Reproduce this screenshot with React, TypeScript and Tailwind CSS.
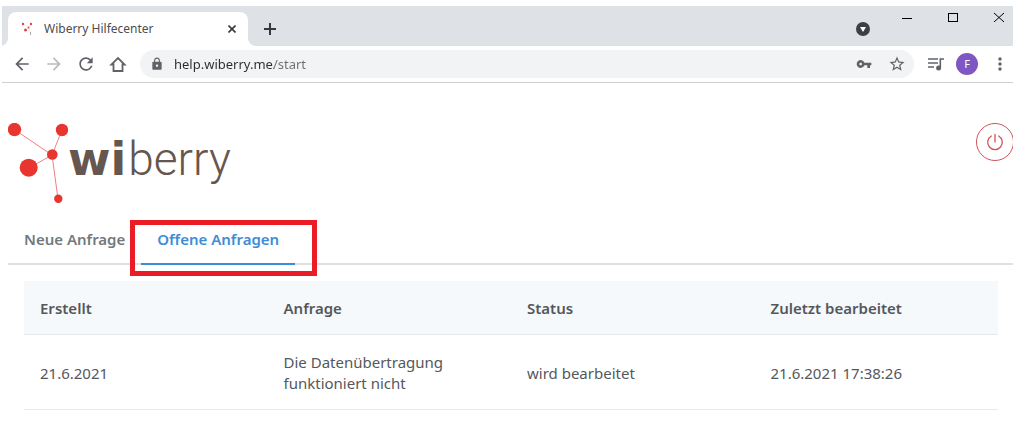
import React from "react";
import {
  MdArrowBack,
  MdArrowForward,
  MdRefresh,
  MdLock,
  MdVpnKey,
  MdStarBorder,
  MdMoreVert,
} from "react-icons/md";

const columns = ["Erstellt", "Anfrage", "Status", "Zuletzt bearbeitet"];

const requests = [
  {
    created: "21.6.2021",
    subject: "Die Datenübertragung funktioniert nicht",
    status: "wird bearbeitet",
    updated: "21.6.2021 17:38:26",
  },
];

function Favicon() {
  return (
    <svg viewBox="0 0 16 16" className="size-4 shrink-0" aria-hidden="true">
      <path d="M3 3 9 7 11 3M9 7 5 9M9 7l2 6" fill="none" stroke="#f6caca" strokeWidth="0.5" />
      <g fill="#d94848">
        <circle cx="3" cy="3" r="1.2" />
        <circle cx="11" cy="3" r="1.2" />
        <circle cx="8.5" cy="6.5" r="0.9" />
        <circle cx="5.5" cy="9" r="1.5" />
      </g>
      <path d="M10.5 11v3" stroke="#aaa" />
    </svg>
  );
}

function TabStrip() {
  return (
    <div className="flex h-10 items-start bg-[#dee1e6] pl-1.5 pt-1.5">
      <div className="relative flex h-[34px] w-60 items-center rounded-t-lg bg-white pl-3 pr-2">
        <Favicon />
        <span className="ml-2 flex-1 text-[12px] text-[#4a4d51]">Wiberry Hilfecenter</span>
        <button type="button" aria-label="Tab schließen" className="grid size-4 place-items-center text-[#35383c]">
          <svg viewBox="0 0 8 8" className="size-2" fill="none" stroke="currentColor" strokeWidth="1.6">
            <path d="M.5.5l7 7M7.5.5l-7 7" />
          </svg>
        </button>
        <svg viewBox="0 0 8 8" className="absolute -right-2 bottom-0 size-2" aria-hidden="true">
          <path d="M0 0A8 8 0 0 0 8 8H0Z" fill="#fff" />
        </svg>
        <svg viewBox="0 0 8 8" className="absolute -left-2 bottom-0 size-2" aria-hidden="true">
          <path d="M8 0A8 8 0 0 1 0 8H8Z" fill="#fff" />
        </svg>
      </div>
      <button type="button" aria-label="Neuer Tab" className="ml-3 grid h-[34px] w-5 place-items-center text-[#35383c]">
        <svg viewBox="0 0 12 12" className="size-3" stroke="currentColor" strokeWidth="2">
          <path d="M6 0V12M0 6H12" />
        </svg>
      </button>
      <div className="flex-1" />
      <button type="button" aria-label="Tabs durchsuchen" className="mr-8 mt-2.5 grid size-3.5 place-items-center rounded-full bg-[#3c4043] text-white">
        <svg viewBox="0 0 14 14" className="size-3.5">
          <path d="M4 5h6l-3 5z" fill="currentColor" />
        </svg>
      </button>
      <div className="flex gap-9 pr-[9px] text-black">
        <button type="button" aria-label="Minimieren" className="size-2.5">
          <svg viewBox="0 0 10 10" className="size-2.5">
            <path d="M0 6.5H10" stroke="currentColor" />
          </svg>
        </button>
        <button type="button" aria-label="Maximieren" className="size-2.5">
          <svg viewBox="0 0 10 10" className="size-2.5">
            <rect x="0.5" y="1.5" width="9" height="8" fill="none" stroke="currentColor" />
          </svg>
        </button>
        <button type="button" aria-label="Schließen" className="size-2.5">
          <svg viewBox="0 0 10 10" className="size-2.5">
            <path d="M0 1 10 10M10 1 0 10" stroke="currentColor" />
          </svg>
        </button>
      </div>
    </div>
  );
}

function Toolbar() {
  return (
    <div className="flex h-[37px] items-center border-b border-[#cfcfd1] bg-white pl-2.5 pr-[3px] text-[#5f6368]">
      <div className="flex items-center gap-3">
        <button type="button" aria-label="Zurück">
          <MdArrowBack className="size-5" />
        </button>
        <button type="button" aria-label="Vorwärts" className="text-[#babcbe]">
          <MdArrowForward className="size-5" />
        </button>
        <button type="button" aria-label="Neu laden">
          <MdRefresh className="size-5" />
        </button>
        <button type="button" aria-label="Startseite">
          <svg viewBox="0 0 20 20" className="size-5" fill="none" stroke="currentColor" strokeWidth="1.8">
            <path d="M3.4 10.500H5.500V17h9V10.500h2.100L10 4Z" />
          </svg>
        </button>
      </div>
      <div className="ml-3 flex h-7 flex-1 items-center rounded-full bg-[#f1f3f4] pl-2.5 pr-2">
        <MdLock className="size-3.5 shrink-0" />
        <input
          aria-label="Adresse"
          defaultValue="help.wiberry.me/start"
          className="ml-2.5 min-w-0 flex-1 bg-[linear-gradient(90deg,#2b2d30_100px,#6b6f74_100px)] bg-clip-text text-[13px] leading-5 text-transparent caret-black outline-none"
        />
        <button type="button" aria-label="Passwörter">
          <MdVpnKey className="size-4" />
        </button>
        <button type="button" aria-label="Lesezeichen" className="ml-4">
          <MdStarBorder className="size-[18px]" />
        </button>
      </div>
      <button type="button" aria-label="Mediensteuerung" className="ml-3">
        <svg viewBox="0 0 18 16" className="h-4 w-[18px]" fill="none" stroke="currentColor" strokeWidth="1.6">
          <path d="M2 3H12M2 7H12M2 11H8M14.300 12V3H18" />
          <circle cx="12.600" cy="12" r="1.700" fill="currentColor" />
        </svg>
      </button>
      <button type="button" aria-label="Profil" className="ml-3 grid size-[22px] place-items-center rounded-full bg-[#7e57c2] text-[11px] text-white">
        F
      </button>
      <button type="button" aria-label="Menü" className="ml-3">
        <MdMoreVert className="size-5" />
      </button>
    </div>
  );
}

function Logo() {
  return (
    <a href="#start" aria-label="wiberry" className="flex">
      <svg viewBox="0 0 60 80" className="h-20 w-[60px]" aria-hidden="true">
        <path d="M7 7 44 32 54 7M44 32 21 45M44 32 50 76" fill="none" stroke="#f08080" strokeWidth="1" />
        <g fill="#e8352f">
          <circle cx="6.5" cy="6.5" r="6.7" />
          <circle cx="54" cy="7" r="6.2" />
          <circle cx="44.3" cy="31.5" r="5.3" />
          <circle cx="20.7" cy="44.7" r="9" />
          <circle cx="50.3" cy="75.7" r="4.2" />
        </g>
      </svg>
      <span className="flex items-baseline pt-1.5 leading-[60px] text-[#65564f]">
        <span className="text-[46px] font-bold [font-family:'DejaVu_Sans',sans-serif]">wi</span>
        <span className="ml-0.5 text-[46px] font-light [font-family:Roboto,sans-serif]">berry</span>
      </span>
    </a>
  );
}

export default function App() {
  return (
    <div className="bg-white pl-0.5 pr-[5px] pt-1.5 [font-family:'Noto_Sans','Open_Sans',sans-serif]">
      <TabStrip />
      <Toolbar />
      <main className="pl-1.5 pt-10">
        <header className="flex items-start justify-between overflow-hidden">
          <Logo />
          <button type="button" aria-label="Abmelden" className="-mr-px grid size-[38px] place-items-center rounded-full border border-[#d0545c] text-[#d0545c]">
            <svg viewBox="0 0 18 18" className="size-[18px]" fill="none" stroke="currentColor" strokeWidth="1.3" strokeLinecap="round">
              <path d="M9 1.500V9M5.300 3A7.300 7.300 0 1 0 12.700 3" />
            </svg>
          </button>
        </header>
        <nav className="relative mt-3 flex border-b-2 border-[#e0e0e0] text-[15px] font-semibold">
          <button type="button" className="-mb-0.5 h-[50px] border-b-2 border-transparent px-4 text-[#74797d]">
            Neue Anfrage
          </button>
          <div className="relative -mb-0.5">
            <button type="button" aria-current="page" className="h-[50px] border-b-2 border-[#3c8dd6] px-4 text-[#3c8dd6]">
              Offene Anfragen
            </button>
            <div className="pointer-events-none absolute -bottom-[11px] -left-[11px] -right-[22px] top-[5px] border-[5px] border-[#ea1c25]" />
          </div>
        </nav>
        <div className="pl-4 pr-[15px] pt-4">
          <table className="w-full table-fixed text-left text-[15px] leading-[21px] text-[#54585d]">
            <thead className="bg-[#f6f9fb]">
              <tr className="border-b border-[#e4e9ec]">
                {columns.map((c) => (
                  <th key={c} scope="col" className="px-4 pb-[15px] pt-[17px] font-semibold">
                    {c}
                  </th>
                ))}
              </tr>
            </thead>
            <tbody>
              {requests.map((r) => (
                <tr key={r.created} className="border-b border-[#e4e9ec]">
                  <td className="px-4 pb-[15px] pt-[17px]">{r.created}</td>
                  <td className="px-4 pb-[15px] pt-[17px]">{r.subject}</td>
                  <td className="px-4 pb-[15px] pt-[17px]">{r.status}</td>
                  <td className="px-4 pb-[15px] pt-[17px]">{r.updated}</td>
                </tr>
              ))}
            </tbody>
          </table>
        </div>
      </main>
    </div>
  );
}
